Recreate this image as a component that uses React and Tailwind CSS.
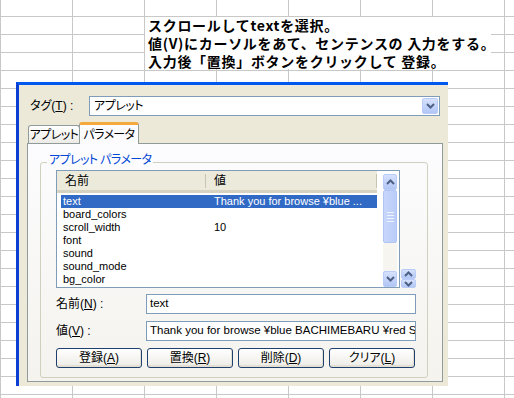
import React from "react";

const rows = [
  { name: "text", value: "Thank you for browse ¥blue ...", selected: true },
  { name: "board_colors", value: "" },
  { name: "scroll_width", value: "10" },
  { name: "font", value: "" },
  { name: "sound", value: "" },
  { name: "sound_mode", value: "" },
  { name: "bg_color", value: "" },
];

function Chevron({ up = false }) {
  return (
    <svg width="9" height="6" viewBox="0 0 9 6">
      <path
        d={up ? "M1 5L4.5 1.5L8 5" : "M1 1L4.5 4.5L8 1"}
        stroke="#4D6185"
        strokeWidth="2"
        fill="none"
      />
    </svg>
  );
}

function XpArrowButton({ up, className = "" }) {
  return (
    <div
      className={`flex items-center justify-center rounded-[2px] border border-[#B9CCF7] bg-linear-to-b from-[#D6E1FC] to-[#B2C6F5] ${className}`}
    >
      <Chevron up={up} />
    </div>
  );
}

function XpButton({ label, hot }) {
  return (
    <button className="flex h-[20px] w-[86px] items-center justify-center rounded-[3px] border border-[#1F3F6E] bg-linear-to-b from-white to-[#ECEBE6] text-[12px] leading-none text-black shadow-[inset_-1px_-2px_0_#E3DFD3]">
      {label}(<span className="underline">{hot}</span>)
    </button>
  );
}

export default function App() {
  return (
    <div className="flex h-[398px] w-[514px] flex-col overflow-hidden bg-white bg-[linear-gradient(to_right,#c8c8c8_1px,transparent_1px),linear-gradient(to_bottom,#c8c8c8_1px,transparent_1px)] bg-[size:72px_18px] bg-[position:0px_16px] font-['Liberation_Sans','Noto_Sans_CJK_JP',sans-serif]">
      {/* note box */}
      <div className="ml-[145px] mt-[17px] h-[52px] w-[346px] bg-white pl-[3px] font-['Noto_Sans_CJK_JP',sans-serif] text-[14px] font-bold leading-[17px] tracking-[0.7px] text-black">
        <div className="h-[18px] whitespace-nowrap">スクロールしてtextを選択。</div>
        <div className="h-[18px] whitespace-nowrap">値(V)にカーソルをあて、センテンスの 入力をする。</div>
        <div className="h-[16px] whitespace-nowrap">入力後「置換」ボタンをクリックして 登録。</div>
      </div>

      {/* dialog */}
      <div className="ml-[16px] mt-[13px] h-[304px] w-[432px] shrink-0 border-l-[3px] border-t-[3px] border-l-[#0A3FD6] border-t-[#0058EE] bg-[#ECE9D8] text-[12px] text-black [font-feature-settings:'palt']">
        {/* tag row */}
        <div className="flex items-center pt-[11px]">
          <div className="w-[70px] whitespace-nowrap pl-[11px]">
            タグ(<span className="underline">T</span>) :
          </div>
          <div className="flex h-[20px] w-[351px] items-center justify-between border border-[#7F9DB9] bg-white p-px">
            <span className="pl-[3px] tracking-[-0.5px]">アプレット</span>
            <XpArrowButton className="h-[16px] w-[16px]" />
          </div>
        </div>

        {/* tabs */}
        <div className="ml-[9px] mt-[6px] flex h-[21px] items-end">
          <div className="flex h-[18px] w-[52px] items-center justify-center whitespace-nowrap rounded-t-[3px] border border-b-0 border-[#919B9C] bg-linear-to-b from-white to-[#ECEBE6] tracking-[-0.6px]">
            アプレット
          </div>
          <div className="relative z-10 -mb-px -ml-px flex h-[22px] w-[60px] items-center justify-center whitespace-nowrap rounded-t-[3px] border-x border-t-[3px] border-x-[#919B9C] border-t-[#F5A93C] bg-[#FCFCFE] tracking-[-0.6px]">
            パラメータ
          </div>
        </div>

        {/* tab panel */}
        <div className="ml-[8px] h-[239px] w-[416px] border border-[#919B9C] bg-linear-to-b from-[#FCFCFE] to-[#F4F3EE]">
          <div className="relative ml-[12px] mt-[18px] h-[216px] w-[388px] rounded-[3px] border border-[#D0D0BF] pl-[15px] pt-[7px]">
            <div className="absolute left-[6px] top-[-11px] whitespace-nowrap bg-[#FCFCFE] px-[2px] leading-[16px] tracking-[-0.6px] text-[#0046D5]">
              アプレット パラメータ
            </div>

            {/* list + spinner */}
            <div className="flex items-end">
              <div className="flex h-[118px] w-[344px] border border-[#7F9DB9] bg-white">
                <div className="w-[320px] overflow-hidden">
                  <div className="flex h-[22px] items-center border-b-[3px] border-[#D6D2C2] bg-[#EBEADB]">
                    <div className="w-[148px] pl-[8px]">名前</div>
                    <div className="h-[14px] w-px bg-[#C7C5B2]" />
                    <div className="flex-1 pl-[8px]">値</div>
                    <div className="h-[14px] w-px bg-[#C7C5B2]" />
                  </div>
                  <div className="pt-[2px] text-[11px] leading-[13px]">
                    {rows.map((r) => (
                      <div
                        key={r.name}
                        className={`ml-[4px] flex h-[13px] whitespace-nowrap ${
                          r.selected ? "bg-[#316AC5] text-white" : "text-black"
                        }`}
                      >
                        <div className="w-[153px] pl-[2px]">{r.name}</div>
                        <div>{r.value}</div>
                      </div>
                    ))}
                  </div>
                </div>
                <div className="ml-[6px] flex w-[14px] flex-col pt-[3px]">
                  <XpArrowButton up className="h-[16px]" />
                  <div className="flex h-[53px] flex-col items-center justify-center gap-[2px] rounded-[2px] border border-[#B1C5F4] bg-linear-to-r from-[#C8D6FB] to-[#B9CDF8]">
                    <div className="h-px w-[7px] bg-[#EEF3FE]" />
                    <div className="h-px w-[7px] bg-[#EEF3FE]" />
                    <div className="h-px w-[7px] bg-[#EEF3FE]" />
                    <div className="h-px w-[7px] bg-[#EEF3FE]" />
                  </div>
                  <div className="flex-1 bg-[#F6F5EF]" />
                  <XpArrowButton className="h-[16px]" />
                </div>
              </div>
              <div className="ml-px flex h-[19px] w-[15px] flex-col">
                <XpArrowButton up className="h-[10px]" />
                <XpArrowButton className="h-[9px]" />
              </div>
            </div>

            {/* name */}
            <div className="mt-[6px] flex items-center">
              <div className="w-[90px] whitespace-nowrap">
                名前(<span className="underline">N</span>) :
              </div>
              <div className="flex h-[20px] w-[270px] items-center border border-[#7F9DB9] bg-white pl-[3px] text-[11.5px]">
                text
              </div>
            </div>

            {/* value */}
            <div className="mt-[7px] flex items-center">
              <div className="w-[90px] whitespace-nowrap">
                値(<span className="underline">V</span>) :
              </div>
              <div className="flex h-[20px] w-[270px] items-center overflow-hidden whitespace-nowrap border border-[#7F9DB9] bg-white pl-[3px] text-[11.5px]">
                Thank you for browse ¥blue BACHIMEBARU ¥red S
              </div>
            </div>

            {/* buttons */}
            <div className="mt-[7px] flex gap-[5px]">
              <XpButton label="登録" hot="A" />
              <XpButton label="置換" hot="R" />
              <XpButton label="削除" hot="D" />
              <XpButton label="クリア" hot="L" />
            </div>
          </div>
        </div>
      </div>
    </div>
  );
}
